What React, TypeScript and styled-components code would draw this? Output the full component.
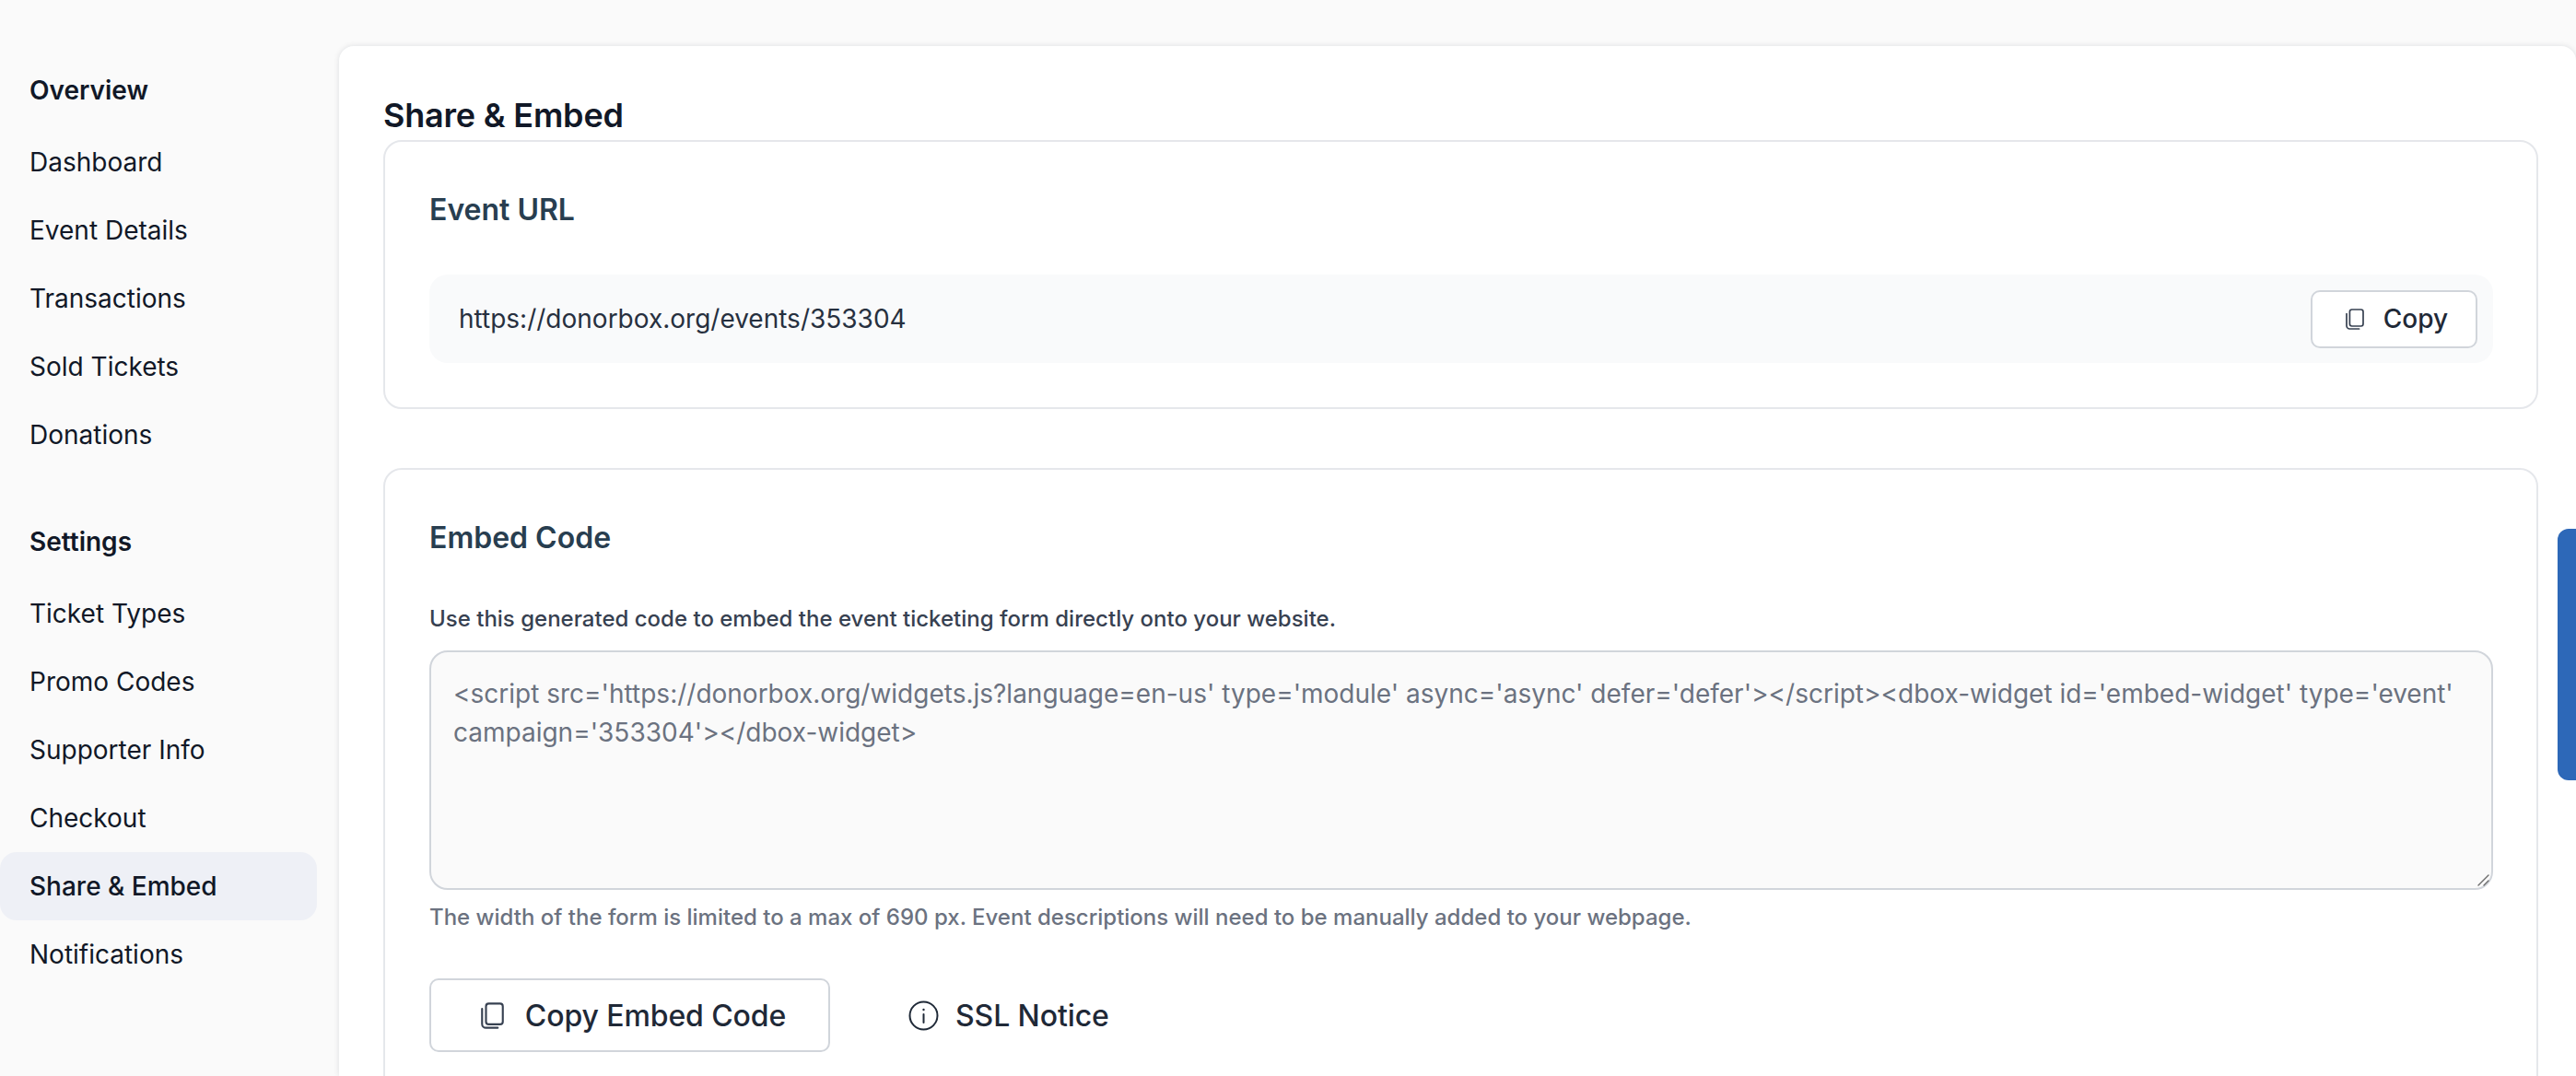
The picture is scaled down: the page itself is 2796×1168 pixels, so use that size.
import React from "react";
import styled, { createGlobalStyle } from "styled-components";

const Global = createGlobalStyle`
  * { box-sizing: border-box; }
  html, body { margin: 0; padding: 0; height: 100%; overflow: hidden; background: #fafafa; }
  body { font-family: Inter, "Noto Sans", "Liberation Sans", sans-serif; }
`;

const Page = styled.div`
  display: flex;
  width: 2796px;
  height: 1168px;
  overflow: hidden;
  background: #fafafa;
  position: relative;
`;

const Sidebar = styled.aside`
  flex: 0 0 368px;
  padding: 78px 24px 0 0;
`;

const NavGroup = styled.nav`
  margin-bottom: 59px;
`;

const NavLabel = styled.div`
  height: 40px;
  line-height: 40px;
  margin-bottom: 21px;
  padding-left: 32px;
  font-size: 28px;
  font-weight: 600;
  color: #111827;
`;

const NavItem = styled.a<{ $active?: boolean }>`
  display: flex;
  align-items: center;
  height: 74px;
  padding-left: 32px;
  border-radius: 18px;
  font-size: 28px;
  font-weight: ${(p) => (p.$active ? 500 : 400)};
  color: #111827;
  background: ${(p) => (p.$active ? "#eef0f6" : "transparent")};
`;

const Panel = styled.main`
  flex: 1;
  margin-top: 50px;
  padding: 55px 41px 0 48px;
  background: #fff;
  border-radius: 16px 16px 0 0;
  box-shadow: 0 0 6px rgba(17, 24, 39, 0.12);
`;

const Heading = styled.h1`
  margin: 0;
  height: 47px;
  line-height: 40px;
  font-size: 36px;
  font-weight: 600;
  letter-spacing: -0.2px;
  color: #111827;
`;

const Card = styled.section`
  margin-bottom: 64px;
  padding: 50px 47px 48px 48px;
  background: #fff;
  border: 2px solid #e5e7eb;
  border-radius: 20px;
`;

const CardTitle = styled.h2<{ $gap: number }>`
  margin: 0 0 ${(p) => p.$gap}px;
  height: 48px;
  line-height: 48px;
  font-size: 32px;
  font-weight: 600;
  color: #283e50;
`;

const UrlBox = styled.div`
  display: flex;
  align-items: center;
  justify-content: space-between;
  height: 96px;
  padding: 0 17px 0 32px;
  background: #f9fafb;
  border-radius: 20px;
  font-size: 28px;
  color: #27303f;
`;

const CopyButton = styled.button`
  display: flex;
  align-items: center;
  justify-content: center;
  gap: 21px;
  width: 181px;
  height: 63px;
  padding: 0 0 0 6px;
  background: #fff;
  border: 2px solid #d1d5db;
  border-radius: 10px;
  font: 500 28px Inter, sans-serif;
  color: #1f2937;
`;

const FieldLabel = styled.label`
  display: block;
  height: 40px;
  line-height: 40px;
  margin-bottom: 14px;
  font-size: 24px;
  font-weight: 500;
  color: #374151;
`;

const CodeWrap = styled.div`
  position: relative;
`;

const CodeArea = styled.textarea`
  display: block;
  width: 100%;
  height: 260px;
  padding: 24px;
  background: #fafafa;
  border: 2px solid #d1d5db;
  border-radius: 20px;
  outline: none;
  resize: none;
  font: 400 28px/42px Inter, sans-serif;
  color: #6b7280;
`;

const ResizeGrip = styled.svg`
  position: absolute;
  right: 3px;
  bottom: 3px;
  width: 16px;
  height: 16px;
`;

const Hint = styled.p`
  margin: 12px 0 48px;
  height: 36px;
  line-height: 36px;
  font-size: 24px;
  font-weight: 500;
  color: #6b7280;
`;

const Actions = styled.div`
  display: flex;
  align-items: center;
  gap: 83px;
`;

const OutlineButton = styled.button`
  display: flex;
  align-items: center;
  justify-content: center;
  gap: 23px;
  width: 435px;
  height: 80px;
  padding: 0 0 0 8px;
  background: #fff;
  border: 2px solid #d1d5db;
  border-radius: 10px;
  font: 500 32px Inter, sans-serif;
  letter-spacing: -0.1px;
  color: #1f2937;
`;

const TextButton = styled.button`
  display: flex;
  align-items: center;
  gap: 18px;
  padding: 0 0 0 2px;
  background: none;
  border: 0;
  font: 500 32px Inter, sans-serif;
  letter-spacing: -0.1px;
  color: #1f2937;
`;

const SideTab = styled.div`
  position: absolute;
  right: 0;
  top: 574px;
  width: 20px;
  height: 273px;
  background: #2d68b8;
  border-radius: 12px 0 0 12px;
`;

const CopyIcon = ({ w, h }: { w: number; h: number }) => (
  <svg width={w} height={h} viewBox="0 0 20 23" fill="none" stroke="#374151" strokeWidth="1.7">
    <rect x="4.4" y="1" width="14.6" height="18" rx="2.4" />
    <path d="M1 5.5V18.6A3.4 3.4 0 0 0 4.4 22H14.6" strokeLinecap="round" />
  </svg>
);

const InfoIcon = () => (
  <svg width="33" height="33" viewBox="0 0 33 33" fill="none" stroke="#1f2937" strokeWidth="2">
    <circle cx="16.5" cy="16.5" r="15" />
    <path d="M16.5 15V24" strokeLinecap="round" />
    <circle cx="16.5" cy="10" r="1.2" fill="#1f2937" stroke="none" />
  </svg>
);

const overview = ["Dashboard", "Event Details", "Transactions", "Sold Tickets", "Donations"];
const settings = ["Ticket Types", "Promo Codes", "Supporter Info", "Checkout", "Share & Embed", "Notifications"];
const code =
  "<script src='https://donorbox.org/widgets.js?language=en-us' type='module' async='async' defer='defer'></script><dbox-widget id='embed-widget' type='event' campaign='353304'></dbox-widget>";

export default function App() {
  return (
    <Page>
      <Global />
      <Sidebar>
        <NavGroup>
          <NavLabel>Overview</NavLabel>
          {overview.map((t) => (
            <NavItem key={t}>{t}</NavItem>
          ))}
        </NavGroup>
        <NavGroup>
          <NavLabel>Settings</NavLabel>
          {settings.map((t) => (
            <NavItem key={t} $active={t === "Share & Embed"}>
              {t}
            </NavItem>
          ))}
        </NavGroup>
      </Sidebar>
      <Panel>
        <Heading>Share &amp; Embed</Heading>
        <Card>
          <CardTitle $gap={46}>Event URL</CardTitle>
          <UrlBox>
            <span>https://donorbox.org/events/353304</span>
            <CopyButton>
              <CopyIcon w={20} h={23} />
              Copy
            </CopyButton>
          </UrlBox>
        </Card>
        <Card>
          <CardTitle $gap={44}>Embed Code</CardTitle>
          <FieldLabel>Use this generated code to embed the event ticketing form directly onto your website.</FieldLabel>
          <CodeWrap>
            <CodeArea readOnly value={code} />
            <ResizeGrip viewBox="0 0 16 16" fill="none" stroke="#6b6b6b" strokeWidth="1.4" strokeLinecap="round">
              <path d="M3 14L14 3M9 14L14 9" />
            </ResizeGrip>
          </CodeWrap>
          <Hint>The width of the form is limited to a max of 690 px. Event descriptions will need to be manually added to your webpage.</Hint>
          <Actions>
            <OutlineButton>
              <CopyIcon w={25} h={29} />
              Copy Embed Code
            </OutlineButton>
            <TextButton>
              <InfoIcon />
              SSL Notice
            </TextButton>
          </Actions>
        </Card>
      </Panel>
      <SideTab />
    </Page>
  );
}
